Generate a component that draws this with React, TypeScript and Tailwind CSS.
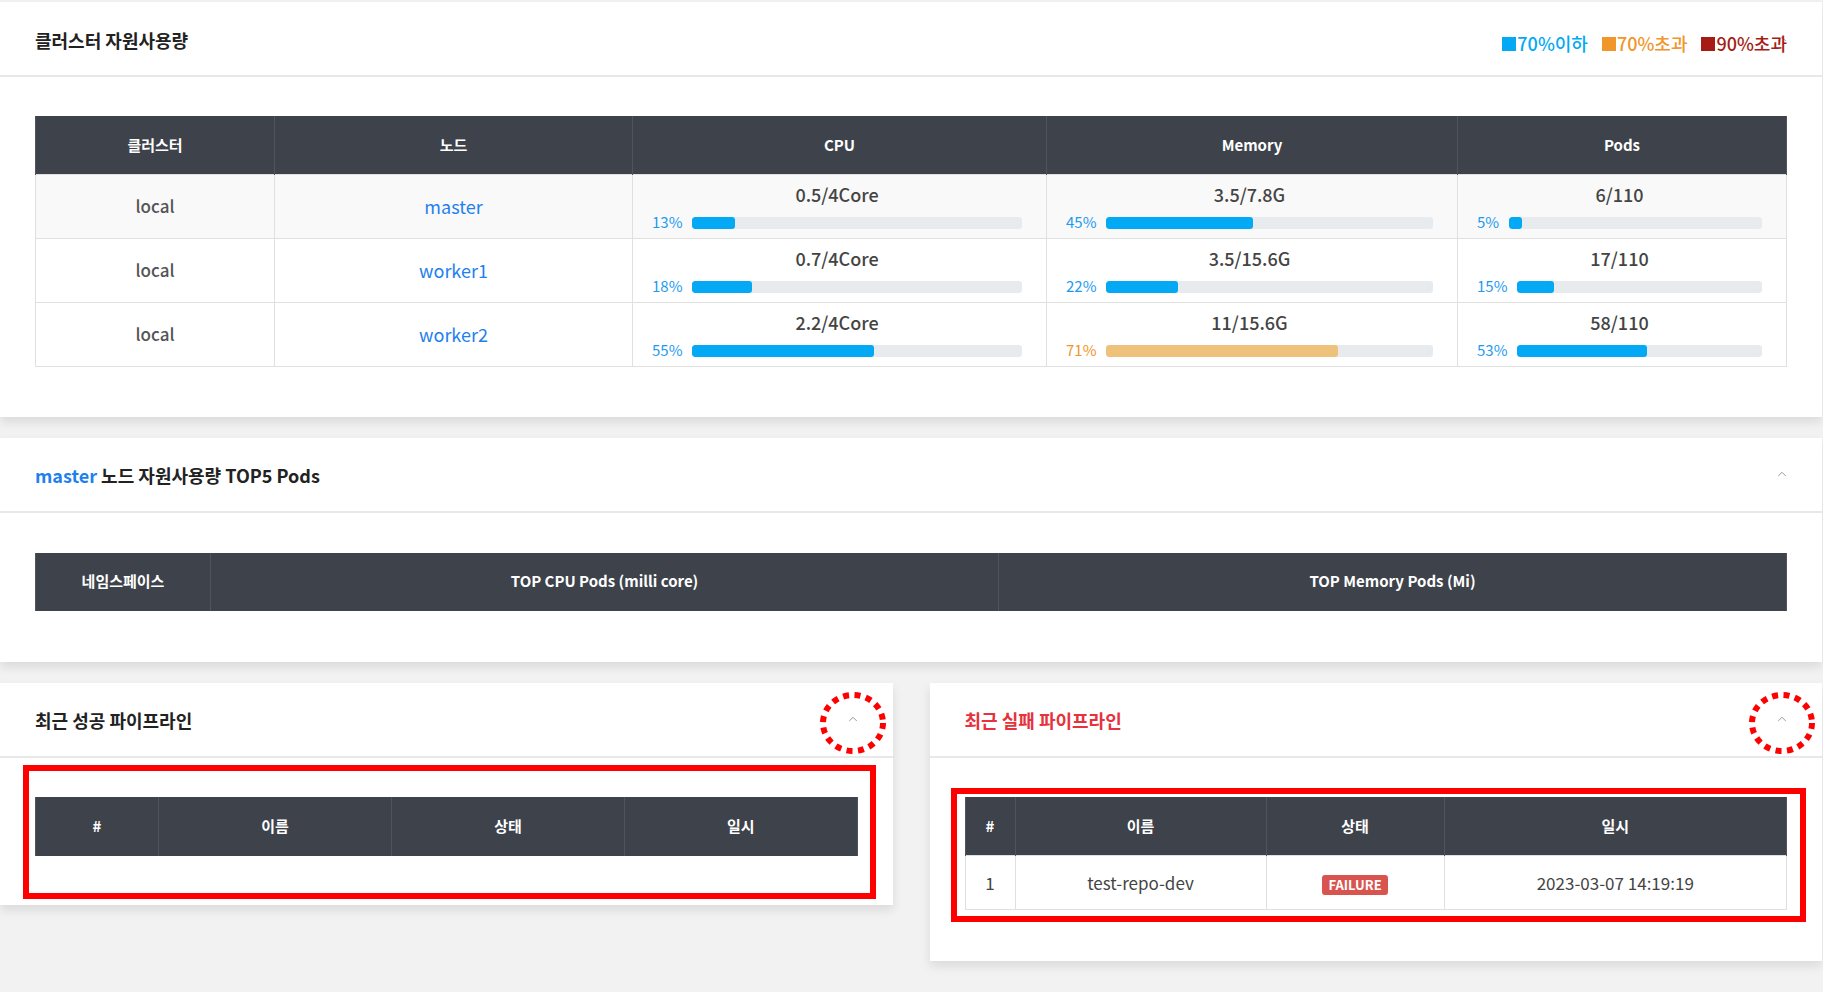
import React from 'react';
import { ChevronUp } from 'lucide-react';

type Usage = { value: string; pct: number };

const nodes: { cluster: string; node: string; cpu: Usage; mem: Usage; pods: Usage }[] = [
  { cluster: 'local', node: 'master', cpu: { value: '0.5/4Core', pct: 13 }, mem: { value: '3.5/7.8G', pct: 45 }, pods: { value: '6/110', pct: 5 } },
  { cluster: 'local', node: 'worker1', cpu: { value: '0.7/4Core', pct: 18 }, mem: { value: '3.5/15.6G', pct: 22 }, pods: { value: '17/110', pct: 15 } },
  { cluster: 'local', node: 'worker2', cpu: { value: '2.2/4Core', pct: 55 }, mem: { value: '11/15.6G', pct: 71 }, pods: { value: '58/110', pct: 53 } },
];

const th = 'bg-[#3e424b] text-white font-bold text-[15px] h-[58px] border-x border-[#50545e] text-center';
const td = 'border border-[#e0e0e0] text-center';

function UsageCell({ u }: { u: Usage }) {
  const warn = u.pct > 70;
  return (
    <td className={`${td} pl-[19px] pr-[24px] pt-[6px] pb-[3px] align-top`}>
      <div className="text-[18px] leading-[26px] font-medium text-[#444]">{u.value}</div>
      <div className="mt-[6px] flex items-center gap-[10px] h-[20px]">
        <span className={`text-[15px] ${warn ? 'text-[#f0962a]' : 'text-[#1e9bef]'}`}>{u.pct}%</span>
        <div className="flex-1 h-[12px] rounded-[3px] bg-[#e8ebee] overflow-hidden">
          <div className={`h-full rounded-[3px] ${warn ? 'bg-[#efc27b]' : 'bg-[#03a9f4]'}`} style={{ width: `${u.pct}%` }} />
        </div>
      </div>
    </td>
  );
}

function Card({ title, children, annotate, className = '' }: { title: React.ReactNode; children: React.ReactNode; annotate?: boolean; className?: string }) {
  return (
    <div className={`relative bg-white shadow-[0_5px_10px_rgba(0,0,0,0.1)] ${className}`}>
      <div className="relative h-[75px] flex items-center justify-between px-[35px] border-b-2 border-[#e8e8e8]">
        <div className="mt-[3px] text-[18px] font-bold text-[#222]">{title}</div>
        <ChevronUp size={14} strokeWidth={1.5} className="text-[#8a8a8a] -mr-[2px]" />
        {annotate && (
          <svg className="absolute right-[5px] top-[7px]" width="70" height="66" viewBox="0 0 70 66">
            <ellipse cx="35" cy="33" rx="30" ry="28" fill="none" stroke="#ff0000" strokeWidth="6" strokeDasharray="6 5.5" />
          </svg>
        )}
      </div>
      {children}
    </div>
  );
}

export default function App() {
  return (
    <div className="min-h-screen bg-[#f2f2f2] pt-[2px] pr-px font-['Noto_Sans_CJK_KR','Noto_Sans',sans-serif]">
      <div className="flex flex-col gap-[21px]">
        <Card title="클러스터 자원사용량">
          <div className="absolute right-[35px] top-[28px] flex items-center gap-[14px] text-[18px] font-medium">
            <span className="flex items-center text-[#03a9f4]"><span className="w-[14px] h-[14px] bg-[#03a9f4] mr-[1px]" />70%이하</span>
            <span className="flex items-center text-[#f0962a]"><span className="w-[14px] h-[14px] bg-[#f0962a] mr-[1px]" />70%초과</span>
            <span className="flex items-center text-[#a61c14]"><span className="w-[14px] h-[14px] bg-[#a61c14] mr-[1px]" />90%초과</span>
          </div>
          <div className="px-[35px] pt-[39px] pb-[50px]">
            <table className="w-full table-fixed border-collapse">
              <colgroup>
                <col className="w-[239px]" />
                <col className="w-[358px]" />
                <col className="w-[414px]" />
                <col className="w-[411px]" />
                <col />
              </colgroup>
              <thead>
                <tr>
                  <th className={th}>클러스터</th>
                  <th className={th}>노드</th>
                  <th className={th}>CPU</th>
                  <th className={th}>Memory</th>
                  <th className={th}>Pods</th>
                </tr>
              </thead>
              <tbody>
                {nodes.map((n, i) => (
                  <tr key={n.node} className={`h-[64px] ${i === 0 ? 'bg-[#f9f9f9]' : 'bg-white'}`}>
                    <td className={`${td} text-[17px] font-medium text-[#555]`}>{n.cluster}</td>
                    <td className={`${td} text-[18px] text-[#1e80ef]`}>{n.node}</td>
                    <UsageCell u={n.cpu} />
                    <UsageCell u={n.mem} />
                    <UsageCell u={n.pods} />
                  </tr>
                ))}
              </tbody>
            </table>
          </div>
        </Card>

        <Card title={<span><span className="text-[#1e80ef]">master</span> 노드 자원사용량 TOP5 Pods</span>}>
          <div className="px-[35px] pt-[40px] pb-[51px]">
            <table className="w-full table-fixed border-collapse">
              <colgroup>
                <col className="w-[175px]" />
                <col className="w-[788px]" />
                <col />
              </colgroup>
              <thead>
                <tr>
                  <th className={th}>네임스페이스</th>
                  <th className={th}>TOP CPU Pods (milli core)</th>
                  <th className={th}>TOP Memory Pods (Mi)</th>
                </tr>
              </thead>
            </table>
          </div>
        </Card>

        <div className="grid grid-cols-2 gap-[37px] items-start">
          <Card title="최근 성공 파이프라인" annotate>
            <div className="px-[35px] pt-[39px] pb-[49px]">
              <table className="w-full table-fixed border-collapse">
                <colgroup>
                  <col className="w-[123px]" />
                  <col className="w-[233px]" />
                  <col className="w-[233px]" />
                  <col />
                </colgroup>
                <thead>
                  <tr>
                    <th className={`${th} h-[59px]`}>#</th>
                    <th className={`${th} h-[59px]`}>이름</th>
                    <th className={`${th} h-[59px]`}>상태</th>
                    <th className={`${th} h-[59px]`}>일시</th>
                  </tr>
                </thead>
              </table>
            </div>
            <div className="absolute left-[23px] top-[82px] w-[853px] h-[134px] border-[6px] border-[#ff0000]" />
          </Card>

          <Card title={<span className="text-[#e5323c]">최근 실패 파이프라인</span>} annotate>
            <div className="px-[35px] pt-[39px] pb-[51px]">
              <table className="w-full table-fixed border-collapse">
                <colgroup>
                  <col className="w-[50px]" />
                  <col className="w-[251px]" />
                  <col className="w-[178px]" />
                  <col />
                </colgroup>
                <thead>
                  <tr>
                    <th className={`${th} h-[59px]`}>#</th>
                    <th className={`${th} h-[59px]`}>이름</th>
                    <th className={`${th} h-[59px]`}>상태</th>
                    <th className={`${th} h-[59px]`}>일시</th>
                  </tr>
                </thead>
                <tbody>
                  <tr className="h-[54px] bg-white">
                    <td className={`${td} text-[17px] text-[#444]`}>1</td>
                    <td className={`${td} text-[17px] text-[#444]`}>test-repo-dev</td>
                    <td className={td}>
                      <span className="inline-block bg-[#d9534f] text-white font-bold text-[13px] leading-[20px] px-[6px] rounded-[3px]">FAILURE</span>
                    </td>
                    <td className={`${td} text-[17px] text-[#444]`}>2023-03-07 14:19:19</td>
                  </tr>
                </tbody>
              </table>
            </div>
            <div className="absolute left-[21px] top-[105px] w-[855px] h-[134px] border-[6px] border-[#ff0000]" />
          </Card>
        </div>
      </div>
    </div>
  );
}
